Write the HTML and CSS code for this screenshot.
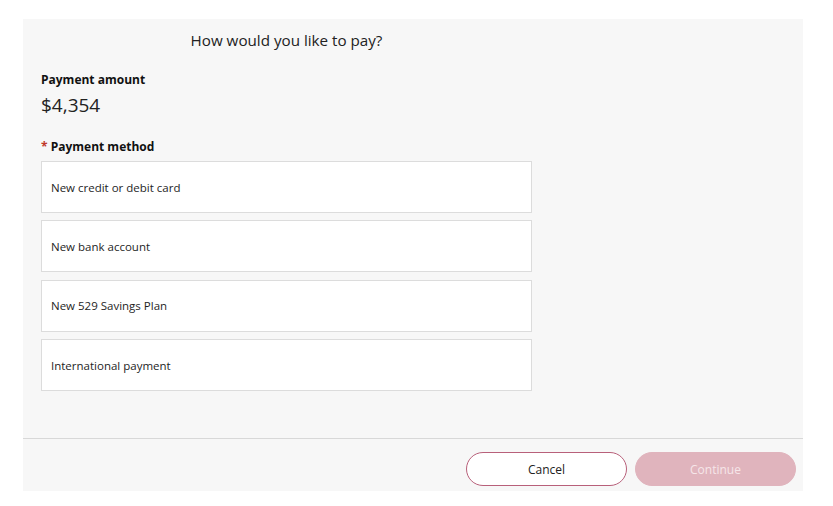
FILE: index.html
```html
<!DOCTYPE html>
<html>
<head>
<meta charset="utf-8">
<link rel="stylesheet" href="styles.css">
</head>
<body>
<div class="panel">
  <div class="content">
    <h1 class="title">How would you like to pay?</h1>
    <div class="label">Payment amount</div>
    <div class="amount">$4,354</div>
    <div class="label method-label"><span class="req">*</span> Payment method</div>
    <div class="options">
      <div class="option">New credit or debit card</div>
      <div class="option">New bank account</div>
      <div class="option">New 529 Savings Plan</div>
      <div class="option">International payment</div>
    </div>
  </div>
  <div class="footer">
    <button class="btn btn-cancel">Cancel</button>
    <button class="btn btn-continue">Continue</button>
  </div>
</div>
</body>
</html>
```
FILE: styles.css
```css
html, body {
  margin: 0;
  padding: 0;
  background: #ffffff;
}
body {
  font-family: "Open Sans", "Noto Sans", sans-serif;
  color: #222;
}
.panel {
  margin: 19px 0 0 23px;
  width: 780px;
  height: 472px;
  background: #f7f7f7;
  display: flex;
  flex-direction: column;
}
.content {
  flex: 1;
  padding: 10px 0 0 18px;
  width: 491px;
}
.title {
  margin: 0;
  font-size: 15.2px;
  font-weight: 400;
  line-height: 22px;
  text-align: center;
  color: #222;
}
.label {
  font-size: 12px;
  font-weight: 700;
  line-height: 18px;
  margin-top: 20px;
  color: #111;
}
.amount {
  font-size: 19px;
  line-height: 26px;
  margin-top: 3px;
  color: #222;
}
.method-label {
  margin-top: 20px;
}
.req {
  color: #c0392b;
}
.options {
  margin-top: 5px;
  display: flex;
  flex-direction: column;
  gap: 7.4px;
}
.option {
  height: 50px;
  background: #fff;
  border: 1px solid #dcdcdc;
  display: flex;
  align-items: center;
  padding-left: 9px;
  font-size: 11.5px;
  color: #1e1e1e;
}
.footer {
  border-top: 1px solid #d8d8d8;
  display: flex;
  justify-content: flex-end;
  align-items: flex-start;
  gap: 8px;
  padding: 13px 7px 0 0;
  box-sizing: border-box;
  height: 53px;
}
.btn {
  width: 161px;
  height: 34px;
  border-radius: 17px;
  font-family: "Open Sans", "Noto Sans", sans-serif;
  font-size: 12px;
  cursor: pointer;
}
.btn-cancel {
  background: #fff;
  border: 1px solid #b8607a;
  color: #222;
}
.btn-continue {
  background: #e0b4bd;
  border: 1px solid #e0b4bd;
  color: #f6e6e9;
}
```
